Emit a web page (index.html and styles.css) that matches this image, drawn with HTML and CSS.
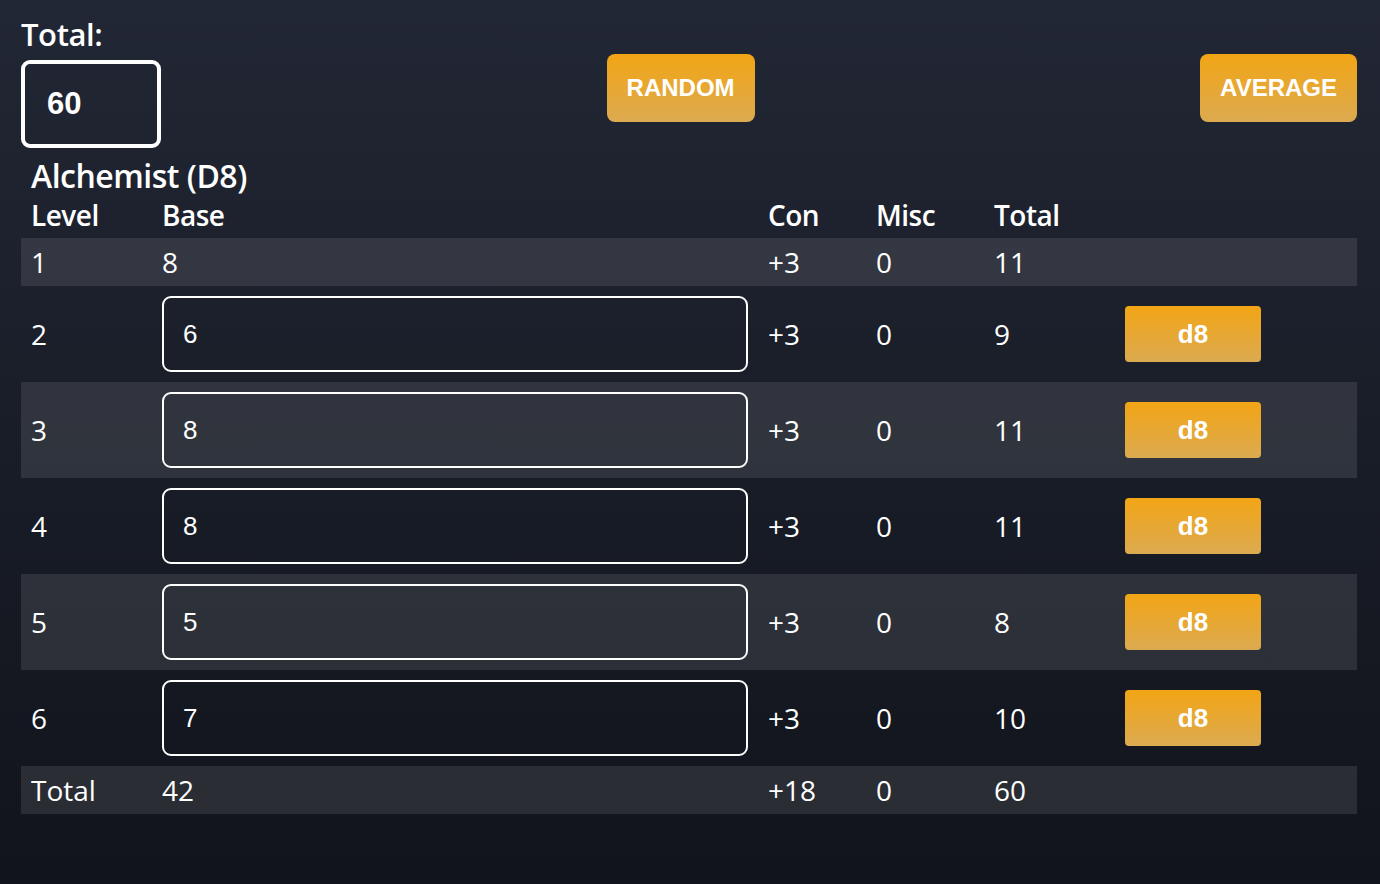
FILE: index.html
```html
<!DOCTYPE html>
<html>
<head>
<meta charset="utf-8">
<link rel="stylesheet" href="styles.css">
</head>
<body>
<div class="page">
  <div class="top">
    <div class="total-block">
      <div class="total-label">Total:</div>
      <div class="total-box">60</div>
    </div>
    <button class="btn big">RANDOM</button>
    <button class="btn big">AVERAGE</button>
  </div>
  <div class="class-title">Alchemist (D8)</div>
  <div class="grid">
    <div class="row head">
      <div class="cell">Level</div><div class="cell">Base</div><div class="cell">Con</div><div class="cell">Misc</div><div class="cell">Total</div><div class="cell"></div>
    </div>
    <div class="row short shade">
      <div class="cell">1</div><div class="cell">8</div><div class="cell">+3</div><div class="cell">0</div><div class="cell">11</div><div class="cell"></div>
    </div>
    <div class="row tall">
      <div class="cell">2</div><div class="cell"><div class="inp">6</div></div><div class="cell">+3</div><div class="cell">0</div><div class="cell">9</div><div class="cell"><button class="btn die">d8</button></div>
    </div>
    <div class="row tall shade">
      <div class="cell">3</div><div class="cell"><div class="inp">8</div></div><div class="cell">+3</div><div class="cell">0</div><div class="cell">11</div><div class="cell"><button class="btn die">d8</button></div>
    </div>
    <div class="row tall">
      <div class="cell">4</div><div class="cell"><div class="inp">8</div></div><div class="cell">+3</div><div class="cell">0</div><div class="cell">11</div><div class="cell"><button class="btn die">d8</button></div>
    </div>
    <div class="row tall shade">
      <div class="cell">5</div><div class="cell"><div class="inp">5</div></div><div class="cell">+3</div><div class="cell">0</div><div class="cell">8</div><div class="cell"><button class="btn die">d8</button></div>
    </div>
    <div class="row tall">
      <div class="cell">6</div><div class="cell"><div class="inp">7</div></div><div class="cell">+3</div><div class="cell">0</div><div class="cell">10</div><div class="cell"><button class="btn die">d8</button></div>
    </div>
    <div class="row short shade">
      <div class="cell">Total</div><div class="cell">42</div><div class="cell">+18</div><div class="cell">0</div><div class="cell">60</div><div class="cell"></div>
    </div>
  </div>
</div>
</body>
</html>
```
FILE: styles.css
```css
html, body {
  margin: 0;
  padding: 0;
}
body {
  width: 1380px;
  height: 884px;
  background: linear-gradient(180deg, #222735 0%, #181c26 55%, #11141b 100%);
  color: #ffffff;
  font-family: "Open Sans", "Liberation Sans", sans-serif;
  overflow: hidden;
}
.page {
  padding: 14px 23px 0 21px;
}
.top {
  display: flex;
  justify-content: space-between;
  align-items: flex-start;
}
.total-block {
  width: 140px;
}
.total-label {
  font-size: 31px;
  font-weight: 600;
  line-height: 40px;
  letter-spacing: -0.4px;
}
.total-box {
  box-sizing: border-box;
  width: 140px;
  height: 88px;
  margin-top: 6px;
  border: 4px solid #ffffff;
  border-radius: 9px;
  padding-left: 22px;
  display: flex;
  align-items: center;
  font-family: "Liberation Sans", Arial, sans-serif;
  font-weight: 700;
  font-size: 31px;
}
.btn {
  border: none;
  color: #ffffff;
  font-family: "Liberation Sans", Arial, sans-serif;
  font-weight: 700;
  background: linear-gradient(180deg, #f2a515 0%, #dcaa50 100%);
  cursor: pointer;
  padding: 0;
}
.btn.big {
  margin-top: 40px;
  height: 68px;
  border-radius: 8px;
  font-size: 24px;
  padding: 0 20px;
}
.class-title {
  margin-top: 9px;
  padding-left: 10px;
  font-size: 32px;
  font-weight: 600;
  line-height: 37px;
  letter-spacing: -0.5px;
}
.grid {
  display: flex;
  flex-direction: column;
}
.row {
  display: grid;
  grid-template-columns: 131px 606px 108px 118px 131px 1fr;
  align-items: center;
}
.row.head {
  height: 44px;
  font-weight: 600;
  letter-spacing: -0.5px;
}
.row.head .cell {
  padding-bottom: 3px;
}
.row.short {
  height: 48px;
}
.row.tall {
  height: 96px;
}
.row.shade {
  background: rgba(255, 255, 255, 0.1);
}
.cell {
  padding-left: 10px;
  font-size: 28px;
  line-height: 38px;
}
.inp {
  box-sizing: border-box;
  width: 586px;
  height: 76px;
  border: 2px solid #ffffff;
  border-radius: 9px;
  padding-left: 19px;
  display: flex;
  align-items: center;
  font-family: "Liberation Sans", Arial, sans-serif;
  font-size: 26px;
}
.btn.die {
  width: 136px;
  height: 56px;
  border-radius: 4px;
  font-size: 26px;
  display: block;
}
```
